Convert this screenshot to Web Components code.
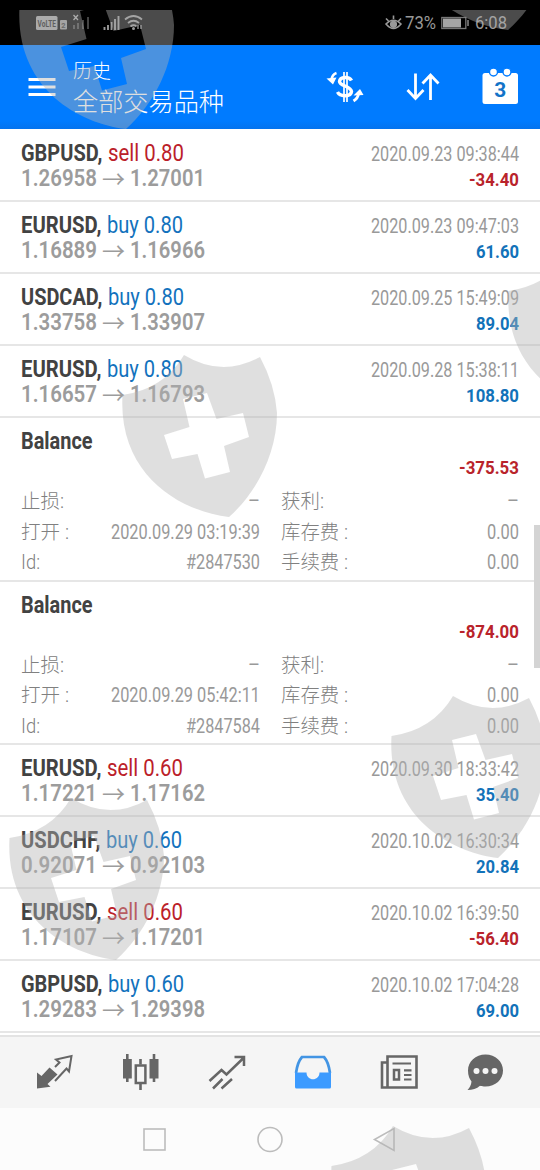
<!DOCTYPE html>
<html lang="zh-CN">
<head>
<meta charset="utf-8">
<title>历史</title>
<style>
html,body{margin:0;padding:0}
body{width:540px;height:1170px;overflow:hidden;background:#fff;font-family:Roboto,"Noto Sans CJK SC",sans-serif}
</style>
</head>
<body>
<history-app></history-app>
<script>
// Text condensed to a given width
class FitText extends HTMLElement{
  connectedCallback(){
    if(!this.shadowRoot){
      this.attachShadow({mode:'open'}).innerHTML=`<style>:host{display:inline-block;white-space:pre;vertical-align:baseline}
      span{display:inline-block;transform-origin:0 50%;white-space:pre}</style><span><slot></slot></span>`;
    }
    const w=+this.getAttribute('w'),s=this.shadowRoot.querySelector('span');
    const n=s.offsetWidth?s.getBoundingClientRect().width:0;
    this.style.width=w+'px';
    if(n)s.style.transform=`scaleX(${w/n})`;
  }
}
customElements.define('fit-text',FitText);

const define=(name,html)=>customElements.define(name,class extends HTMLElement{
  connectedCallback(){ if(!this.shadowRoot) this.attachShadow({mode:'open'}).innerHTML=typeof html==='function'?html(this):html; }
});

define('status-bar',`<style>
:host{display:flex;box-sizing:border-box;height:45px;background:#000;padding:0 33px 0 35px;justify-content:space-between;align-items:center;color:#999;font-size:17.5px}
svg{display:block}.r{display:flex;align-items:center}
</style>
<svg width="110" height="45" viewBox="35 0 110 45">
<rect x="36" y="16" width="21.500" height="14" rx="1.5" fill="#a5a5a5"/>
<text x="37.5" y="26.7" font-family="Roboto" font-weight="700" font-size="9.5" textLength="18.500" lengthAdjust="spacingAndGlyphs" fill="#222">VoLTE</text>
<rect x="60" y="20" width="7" height="9.500" rx="1" fill="#999"/><text x="61.300" y="27.500" font-family="Roboto" font-weight="700" font-size="7.500" fill="#333">2</text>
<path d="M73.500 15l4.500 5M78 15l-4.500 5" stroke="#aaa" stroke-width="1.300"/>
<path d="M74 29v-4M78 29v-6M83 29v-9M88 29V17" stroke="#555" stroke-width="1.600"/>
<path d="M104.500 30v-3M108 30v-5M111.500 30v-8M115 30V19M118.500 30V16" stroke="#999" stroke-width="1.900"/>
<g fill="none" stroke="#999" stroke-width="1.800"><path d="M125 19.500q8.500-7 17 0M128 23q5.500-4.500 11 0M130.500 26.500q3-2.500 6 0"/></g><circle cx="133.500" cy="28.500" r="1.500" fill="#999"/><path d="M138 29v-4M141 29v-4" stroke="#999" stroke-width="1.300"/>
</svg>
<div class="r">
<svg width="20" height="20" viewBox="0 0 20 20" style="margin-right:1px" fill="none" stroke="#999" stroke-width="1.600"><path d="M2 11Q9.500 3.500 17 11Q9.500 20 2 11ZM2 5.500l2.500 2.500M9.500 2.500v3.500M17 5.500l-2.500 2.500"/><circle cx="9.500" cy="11.300" r="2.800" fill="#999"/></svg>
<fit-text w="31">73%</fit-text>
<svg width="28" height="14" viewBox="0 0 28 14" style="margin:0 6px 0 5px"><rect x=".8" y="1.500" width="24" height="11" fill="none" stroke="#777" stroke-width="1.300"/><rect x="2" y="2.500" width="18" height="9" fill="#a5a5a5"/><path d="M27 4v6" stroke="#888" stroke-width="1.500"/></svg>
<fit-text w="32">6:08</fit-text>
</div>`);

define('title-bar',`<style>
:host{display:flex;box-sizing:border-box;height:84px;background:linear-gradient(#007bff 76px,#0473ee);padding:0 18px 0 28px;color:#fff;font-family:"Noto Sans CJK SC",sans-serif;font-weight:300}
svg{display:block}.t{margin-left:17px;padding-top:12px;flex:1}
.a{font-size:19px;line-height:26px;height:26px}.b{font-size:25px;line-height:34px;height:34px}
</style>
<svg width="28" height="84" viewBox="0 0 28 84"><path d="M.5 34.500h27M.5 42h27M.5 49.500h27" stroke="#fff" stroke-width="3"/></svg>
<div class="t"><div class="a"><fit-text w="38">历史</fit-text></div><div class="b"><fit-text w="151">全部交易品种</fit-text></div></div>
<svg width="200" height="84" viewBox="322 45 200 84" fill="none" stroke="#fff">
<path d="M351.500 80.500C349.500 76.500 340 76 339.500 81.500C339.500 86 351 86 351.500 91.500C351 97 340 97 337.500 92" stroke-width="3.400"/>
<path d="M344 72v30M347 72v30" stroke-width="1.700"/>
<path d="M336.500 73Q332 74.500 331.500 80" stroke-width="2.600"/><path d="M326.500 78.500l10-1-3.500 7z" fill="#fff" stroke="none"/>
<path d="M353.500 101Q358 98 358.500 94" stroke-width="2.800"/><path d="M353.500 95.500l10-.5-3.500-6z" fill="#fff" stroke="none"/>
<path d="M415.500 73.500v25M407.500 90l8 8.500 8-8.500M430.500 100V75M422.500 83.500l8-8.500 8 8.500" stroke-width="2.800"/>
<rect x="482.500" y="73" width="35.500" height="31" rx="2.500" fill="#fff" stroke="none"/>
<circle cx="493.500" cy="72" r="4" fill="#fff" stroke="#007bff" stroke-width="1.400"/><circle cx="507" cy="72" r="4" fill="#fff" stroke="#007bff" stroke-width="1.400"/>
<text x="500.300" y="97" text-anchor="middle" font-family="Roboto" font-size="20" font-weight="700" fill="#1273c8" stroke="none" textLength="12" lengthAdjust="spacingAndGlyphs">3</text>
</svg>`);

define('deal-row',e=>{
  const g=k=>e.getAttribute(k),side=g('side');
  const sw={GBPUSD:81.5,EURUSD:80.5,USDCAD:81.5,USDCHF:79.500}[g('sym')];
  const n=parseFloat(g('profit'));
  return `<style>
:host{display:flex;box-sizing:border-box;height:72px;padding:11px 21px 0;justify-content:space-between;border-bottom:2px solid #e6e6e6;line-height:25px}
.l{font-size:24px}.l div{height:24.500px;display:flex}
.s{color:#424242;font-weight:700;margin-right:5.500px}.buy{color:#1272bd}.sell{color:#bb2029}
.p{color:#9c9c9c;font-weight:600;font-size:23.500px}.p .ar{font-family:"Noto Sans CJK SC",sans-serif;font-weight:400;margin:0 5px 0 5px}
.r{padding-top:.5px;text-align:right}.r div{height:25.500px}.d{font-size:19.500px;color:#999}
.v{font-size:19px;font-weight:700;color:${n<0?'#b9232b':'#1272b9'}}
</style><div class="l"><div><fit-text class="s" w="${sw}">${g('sym')},</fit-text><fit-text class="${side}" w="76">${side} ${g('vol')}</fit-text></div>
<div class="p"><fit-text w="76">${g('from')}</fit-text><fit-text class="ar" w="23">→</fit-text><fit-text w="75">${g('to')}</fit-text></div></div>
<div class="r"><div class="d"><fit-text w="148">${g('time')}</fit-text></div><div class="v"><fit-text w="${{5:43,6:n<0?50:53}[g('profit').length]}">${g('profit')}</fit-text></div></div>`;
});

define('balance-row',e=>{
  const g=k=>e.getAttribute(k);
  const c=(l,w,v,vw)=>`<div class="c"><fit-text class="k" w="${w}">${l}</fit-text><fit-text w="${vw}">${v}</fit-text></div>`;
  return `<style>
:host{display:block;box-sizing:border-box;height:163.500px;padding:10px 21px 0;border-bottom:2px solid #e6e6e6;line-height:26px}
.t{font-size:24px;font-weight:700;color:#424242;height:27px}
.v{font-size:19px;font-weight:700;color:#b9232b;text-align:right;height:32px}
.g{display:grid;grid-template-columns:239px 238px;column-gap:21px;grid-auto-rows:30.500px;font-size:19.500px;color:#999;line-height:30px}
.c{display:flex;justify-content:space-between;height:30px;overflow:visible}
.k{font-family:Roboto,"Noto Sans CJK SC",sans-serif;font-weight:300;color:#808080}
</style><div class="t"><fit-text w="71.500">Balance</fit-text></div><div class="v"><fit-text w="60">${g('amount')}</fit-text></div>
<div class="g">${c('止损:',43,'–',12)}${c('获利:',43,'–',12)}${c('打开 :',48,g('time'),149)}${c('库存费 :',67,'0.00',32)}${c('Id:',19,g('ticket'),74)}${c('手续费 :',67,'0.00',32)}</div>`;
});

define('tab-bar',`<style>
:host{display:block;box-sizing:border-box;height:73px;background:#f5f5f5;border-top:2px solid #e3e3e3}
div{display:grid;grid-template-columns:repeat(6,86px);padding-left:12px;height:70px;align-items:center}
svg{width:38px;height:38px;justify-self:center;fill:none;stroke:#666;stroke-width:2}
</style><div>
<svg viewBox="0 0 38 38"><path d="M1 35.500L14.500 33.800 11.500 31 21.500 21.500 13.500 14.500 5.500 23 1 19.500Z" fill="#666" stroke="none"/><path d="M19 14L23.500 9.500 20 6.500 35.500 3 33 18.500 30.500 15.500 19 28" stroke-width="2"/></svg>
<svg viewBox="0 0 38 38"><path d="M5.300 1v28M32 1v28" stroke-width="2.600"/><path d="M1 6h8.800v19.500H1zM27.500 6h9v19.500h-9z" fill="#666" stroke="none"/><path d="M18.500 6v5.500M18.500 31v6" stroke-width="2.600"/><rect x="13.800" y="12.500" width="9.600" height="17.500" stroke-width="2.500"/></svg>
<svg viewBox="0 0 38 38" style="stroke-width:2.500"><path d="M1.500 28L13.500 17l5 4.500L35.500 5M26.500 4h9.500v9M5 35.500L14.500 26M13.500 35.500L24 26"/></svg>
<svg viewBox="0 0 38 38"><path d="M2 20Q3.500 9 8 4h22q4.500 5 6 16" stroke="#4395e4" stroke-width="2.700"/><path d="M1 19.500h11.500c0 9 13 9 13 0H37V34a1.500 1.500 0 0 1-1.500 1.500h-33A1.500 1.500 0 0 1 1 34z" fill="#3c9bff" stroke="none"/></svg>
<svg viewBox="0 0 38 38"><path d="M7.500 9.500H2v25h34.500V3.500h-29v31" stroke-width="2.600"/><path d="M12.500 10.500H31M24 17.300h7.500M24 22h7.500M24 26.500h7.500" stroke-width="2.200"/><rect x="14" y="17" width="5" height="9.500" stroke-width="2.500"/></svg>
<svg viewBox="0 0 38 38"><path d="M19.500 1.500c10 0 17.500 7 17.500 16S29.500 33.500 19.500 33.500c-2 0-4-.2-5.500-.8Q9 37 1.500 37q3.500-3.500 4-8.500Q2 24 2 17.500c0-9 7.500-16 17.500-16z" fill="#666" stroke="none"/><g fill="#f5f5f5" stroke="none"><circle cx="10.500" cy="18" r="3"/><circle cx="19.500" cy="18" r="3"/><circle cx="28.500" cy="18" r="3"/></g></svg>
</div>`);

define('nav-bar',`<style>:host{display:block;height:62px;background:#fcfcfc}svg{display:block}</style>
<svg width="540" height="62" viewBox="0 1108 540 62" fill="none" stroke="#bcbcbc" stroke-width="1.600"><rect x="144" y="1129" width="21" height="21"/><circle cx="270" cy="1139.500" r="12"/><path d="M394 1128.500v22L374.500 1139.500z"/></svg>`);

const shield='M184 355Q222 378 260 357Q275 385 277 413C277 453 257 492 229 517C180 511 118 475 122.500 395Q164 389 184 355ZM183 399L207 393L216.500 419L243 413L249 437L224 446L230 472L205 478.500L197.500 454L172 459L164 435L189.500 427Z';
define('shield-overlay',`<style>:host{position:absolute;left:0;top:0;width:540px;height:1170px;pointer-events:none}svg{display:block}</style>
<svg width="540" height="1170"><defs><clipPath id="c"><rect y="10" width="540" height="1160"/></clipPath></defs><g clip-path="url(#c)" fill="#b2b2b2" fill-opacity=".42" fill-rule="evenodd">
${[[0,0],[-103,-388],[279,-487],[386,-104],[269,341],[-113,443],[209,771]].map(p=>`<path transform="translate(${p})" d="${shield}"/>`).join('')}
</g></svg>`);
define('scroll-thumb',`<style>:host{position:absolute;right:0;top:525px;width:6px;height:143px;background:#d4d4d4}</style>`);

const deal=(sym,side,vol,from,to,time,profit)=>`<deal-row sym="${sym}" side="${side}" vol="${vol}" from="${from}" to="${to}" time="${time}" profit="${profit}"></deal-row>`;
define('history-app',`<style>:host{display:flex;flex-direction:column;position:relative;width:540px;height:1170px;overflow:hidden;background:#fff}
main{box-sizing:border-box;height:906px;padding-top:1px;flex:none}</style>
<status-bar></status-bar><title-bar></title-bar><main>
${deal('GBPUSD','sell','0.80','1.26958','1.27001','2020.09.23 09:38:44','-34.40')}
${deal('EURUSD','buy','0.80','1.16889','1.16966','2020.09.23 09:47:03','61.60')}
${deal('USDCAD','buy','0.80','1.33758','1.33907','2020.09.25 15:49:09','89.04')}
${deal('EURUSD','buy','0.80','1.16657','1.16793','2020.09.28 15:38:11','108.80')}
<balance-row amount="-375.53" time="2020.09.29 03:19:39" ticket="#2847530"></balance-row>
<balance-row amount="-874.00" time="2020.09.29 05:42:11" ticket="#2847584"></balance-row>
${deal('EURUSD','sell','0.60','1.17221','1.17162','2020.09.30 18:33:42','35.40')}
${deal('USDCHF','buy','0.60','0.92071','0.92103','2020.10.02 16:30:34','20.84')}
${deal('EURUSD','sell','0.60','1.17107','1.17201','2020.10.02 16:39:50','-56.40')}
${deal('GBPUSD','buy','0.60','1.29283','1.29398','2020.10.02 17:04:28','69.00')}
</main><tab-bar></tab-bar><nav-bar></nav-bar><scroll-thumb></scroll-thumb><shield-overlay></shield-overlay>`);
</script>
</body>
</html>
